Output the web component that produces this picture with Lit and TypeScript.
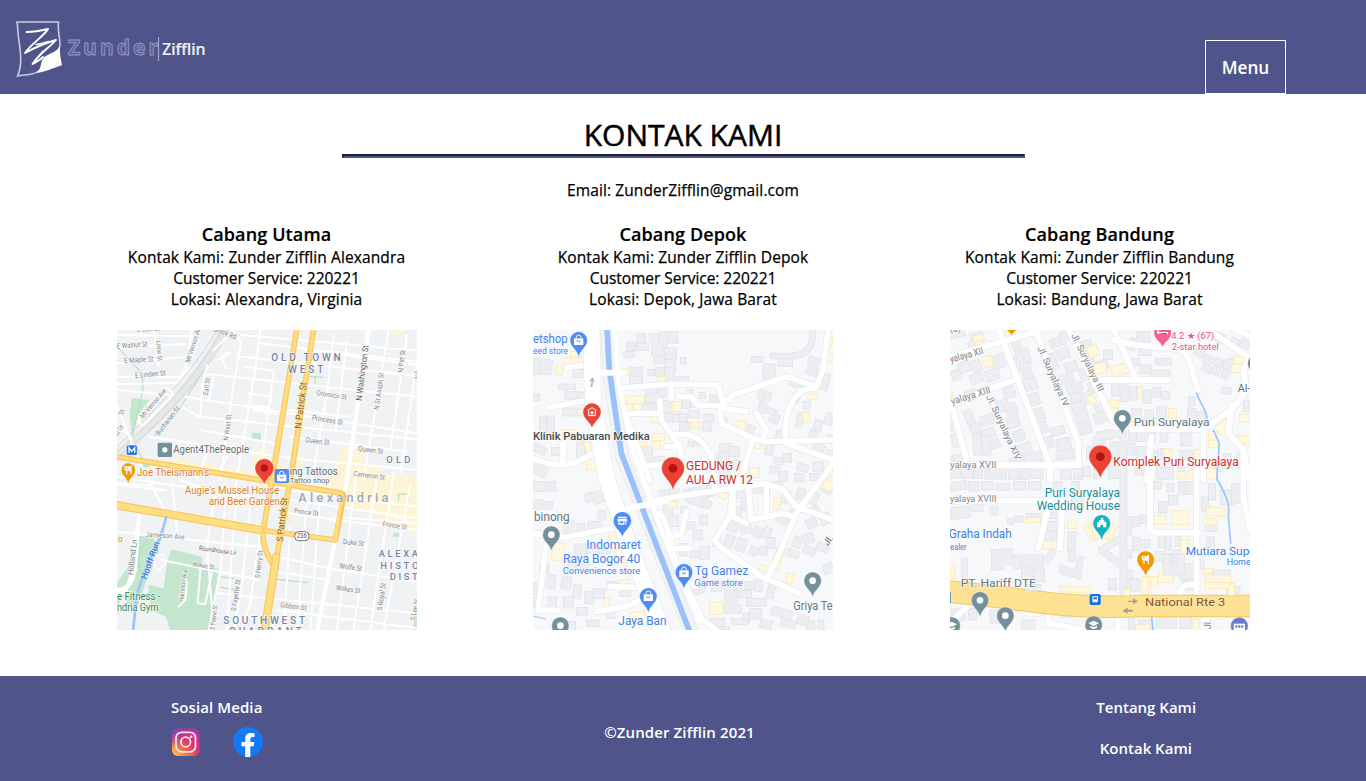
import { LitElement, html, svg, css } from "lit";
import { customElement } from "lit/decorators.js";

type Label = [text: string, x: number, y: number, width: number, size: number, kind: string, angle?: number];

// Map drawings share a 900 x 900 coordinate space.
const roads = (cls: string, width: number, d: string) =>
  svg`<path class="road ${cls}" stroke-width=${width} d=${d}></path>`;

const blocks = (cls: string, data: string) =>
  data.trim().split(/\s*;\s*/).filter(Boolean).map((row) => {
    const [x, y, w, h, a = 0] = row.split(/\s+/).map(Number);
    return svg`<rect class=${cls} x=${x} y=${y} width=${w} height=${h} transform="rotate(${a} ${x + w / 2} ${y + h / 2})"></rect>`;
  });

const spaced = new Set(["area", "city"]);
const labels = (list: Label[]) =>
  list.map(([text, x, y, width, size, kind, angle = 0]) =>
    svg`<text class="label ${kind}" x=${x} y=${y} textLength=${width} lengthAdjust=${spaced.has(kind) ? "spacing" : "spacingAndGlyphs"}
      font-size=${spaced.has(kind) ? size : size * 1.12} transform="rotate(${angle} ${x} ${y})">${text}</text>`);

const pin = (x: number, y: number, r: number, tip: number, fill: string, inner: unknown) => svg`
  <path fill=${fill} stroke="#fff" stroke-width="1.5" stroke-opacity=".6"
    d="M${x - r} ${y}A${r} ${r} 0 1 1 ${x + r} ${y}C${x + r} ${y + r * 0.75} ${x + r * 0.25} ${y + r} ${x} ${tip}C${x - r * 0.25} ${y + r} ${x - r} ${y + r * 0.75} ${x - r} ${y}Z"></path>
  <g transform="translate(${x} ${y})">${inner}</g>`;

const dot = (r: number, fill = "#fff") => svg`<circle r=${r} fill=${fill}></circle>`;
const bag = svg`<path fill="#fff" d="M-14 -6H14V14H-14Z"></path><path d="M-7 -6V-9A7 7 0 0 1 7 -9V-6" fill="none" stroke="#fff" stroke-width="3"></path><path d="M-6 1Q0 8 6 1" fill="none" stroke="#4f8df5" stroke-width="3"></path>`;
const shop = svg`<path fill="#fff" d="M-13 -12H13V-8H-13ZM-14 -6H14L15 2H12V12H-12V2H-15Z"></path><path fill="#4f8df5" d="M-8 2H3V8H-8ZM6 2H9V12H6Z"></path>`;
const fork = svg`<path d="M-10 -12V-3Q-10 1 -5 1Q0 1 0 -3V-12M-5 -12V13M8 13V-12Q3 -10 3 2H8" fill="none" stroke="#fff" stroke-width="3.6"></path>`;
const clinic = svg`<path d="M-13 -5L0 -13L13 -5M-10 -5V11H10V-5" fill="none" stroke="#fff" stroke-width="3"></path><path d="M0 -4V8M-6 2H6" stroke="#fff" stroke-width="3.5"></path>`;
const venue = svg`<path fill="#fff" d="M-14 12V-4H-8V-10H-2V-17L8 -14L0 -10H8V-4H14V12H4V4H-4V12Z"></path>`;
const cap = svg`<path fill="#fff" d="M-16 -4L0 -12L16 -4L0 4ZM-10 3L0 8L10 3V9L0 14L-10 9Z"></path>`;

const alexandria = svg`
  <rect width="900" height="900" fill="#f0f2f4"></rect>
  <g fill="#fdf3d5">
    <path d="M820 0H862V10H820ZM665 385L672 350H718V372H742V400L788 410V432L900 440V612L800 590L775 555L700 540L686 500L600 480L590 450L640 445ZM160 382L410 425V360H455V400L520 415V360L555 370V440L500 445L170 405Z"></path>
    <path d="M215 470L400 495L395 530L210 500ZM510 530L545 532L535 580L500 575Z" opacity=".45"></path>
  </g>
  <g fill="#c4e6cf">
    <path d="M44 204L96 210L62 258L46 322L38 260ZM405 308H432V331H405ZM70 402H105L95 412H80ZM63 615L112 628L126 665L85 760L55 850L30 820V780L0 830V900H0V760L40 700L62 680Z"></path>
    <path d="M163 658L256 681V705L306 716L290 830L276 900H158L148 862L102 840L94 764L140 775L150 698ZM828 608H846V620H828ZM892 860L900 850V900H890Z"></path>
  </g>
  ${roads("green", 3, "M0 50L75 130L78 180L45 320M318 28L262 120L178 250L110 320M262 120L272 132M580 140L618 142M594 142V160M84 402L48 330M312 740L350 746M310 772L350 778M480 748L572 758M845 510V492H873V512M148 565L120 635M90 630Q50 680 70 730")}
  ${roads("rail", 26, "M325 -5C270 105 165 240 0 378")}
  ${roads("railLine", 3, "M318 -5C260 105 155 235 0 365M300 0C250 90 150 210 0 350M336 0C285 105 180 240 0 385")}
  ${roads("white", 6, "M0 15L225 18M0 55L205 42M0 100L215 80M0 140L190 142L245 30M0 163L180 158L215 115M110 0L125 105M0 180L170 195M65 260L145 175Q175 180 160 205L80 285Q60 285 68 260M0 285L45 325M0 225L45 340L75 410M215 60L225 0M360 15L372 40L350 160L310 450M360 78L900 138M270 132L900 200M205 200L250 208L900 310M195 230L245 260L900 328M100 320L520 385L900 420M290 60L350 0M375 15L900 62M425 40L900 95M430 0L410 145L350 500M270 105L255 180L250 260M290 140L275 210M380 110L470 122M395 190L465 200L455 232L385 225M470 125L430 430M650 15L630 190L585 450M690 35L655 300M815 0L740 450M870 15L820 360M900 95L850 430M520 240L700 260M560 60L900 105M410 240L480 252M250 300L470 340M520 320L870 365M270 370L240 450M0 440L400 500M0 465L145 480")}
  ${roads("white", 6, "M95 450L150 555L0 530M0 460L100 465M165 460L180 600M190 450L270 480M0 605L270 635L430 650M130 690L145 692L280 720L430 750M480 680L660 720L900 755M480 725L640 750M430 650L340 640M295 480L270 650L290 900M325 510L310 720L275 900M360 510L345 650L330 900M400 530L375 760L350 900M430 600L400 820L370 900M520 590L500 900M570 500L540 900M610 480L580 900M480 840L900 895M300 790L900 850M520 510L900 565M520 550L655 570L900 600M720 420L660 900M780 440L710 900M830 430L760 900M880 460L800 900M510 480L900 530M190 800Q218 690 205 810L185 830M250 720L242 820L265 822L285 725")}
  ${roads("white", 13, "M68 548L60 620L55 700Q50 780 0 780M755 -5L690 450L600 905M0 795Q40 790 50 690")}
  ${roads("white", 5, "M130 675C100 670 110 740 130 715C160 700 145 675 130 675M340 70C300 60 320 120 335 115M300 90L335 72M760 540L870 570M650 560L900 580M350 340L310 420")}
  ${roads("orangeEdge", 17, "M540 -5L465 450L437 610Q440 665 472 710M590 -5L525 420L500 560L442 905M-5 380L400 445L675 490Q683 495 678 510L655 630L430 600L-5 525")}
  ${roads("orange", 10, "M540 -5L465 450L437 610Q440 665 472 710M590 -5L525 420L500 560L442 905M-5 380L400 445L675 490L655 630L430 600L-5 525")}
  ${roads("orangeEdge", 25, "M-5 525L430 600M478 680L442 905")}
  ${roads("orange", 18, "M-5 525L430 600M478 680L442 905")}
  ${roads("water", 8, "M148 560L130 625C110 660 65 760 58 805L48 905")}
  ${labels([
    ["E Oak St", 60, 6, 68, 17, "street", -3], ["E Walnut St", 0, 56, 92, 20, "street", -4], ["E Maple St", 22, 100, 88, 20, "street", -4],
    ["E Linden St", 55, 144, 92, 20, "street", -5], ["Little St", 117, 32, 62, 17, "street", 85], ["Mt Vernon Ave", 218, 100, 118, 19, "street", -72],
    ["Mt Vernon Ave", 78, 266, 110, 19, "street", -49], ["Block Rd", 288, 2, 72, 20, "street", 22], ["Buchanan St", 125, 318, 105, 19, "street", -52],
    ["Earl St", 272, 196, 52, 19, "street", -82], ["N West St", 334, 332, 78, 19, "street", -83], ["St", 18, 256, 16, 18, "street", -75], ["St Dr", 2, 320, 36, 18, "street", -60],
    ["OLD TOWN", 463, 94, 208, 30, "area"], ["WEST", 513, 128, 106, 30, "area"], ["N Patrick St", 552, 297, 140, 25, "highway", -83],
    ["N Washington St", 734, 213, 168, 23, "dark", -83], ["N Pitt St", 858, 128, 68, 19, "street", -84], ["N St Asaph St", 785, 240, 112, 19, "street", -82],
    ["N R", 905, 148, 25, 17, "street", -84], ["Oronoco St", 598, 195, 91, 19, "street", 9], ["Princess St", 584, 270, 94, 20, "street", 9],
    ["Queen St", 564, 336, 73, 20, "street", 8], ["Queen St", 722, 362, 76, 20, "street", 8], ["Cameron St", 709, 437, 94, 19, "street", 8],
    ["OLD", 808, 398, 72, 28, "area"], ["Agent4ThePeople", 169, 368, 227, 29, "place"], ["Joe Theismann's", 60, 438, 217, 28, "food"],
    ["ing Tattoos", 518, 434, 144, 28, "place"], ["Tattoo shop", 519, 459, 118, 20, "place"], ["Augie's Mussel House", 204, 492, 283, 28, "food"],
    ["and Beer Garden", 276, 525, 212, 28, "food"], ["Alexandria", 544, 516, 270, 38, "city"], ["S Patrick St", 497, 636, 133, 24, "highway", -84],
    ["Prince St", 530, 549, 74, 19, "street", 7], ["Prince St", 796, 589, 74, 19, "street", 8], ["Duke St", 677, 642, 64, 20, "street", 6],
    ["Wolfe St", 667, 715, 68, 20, "street", 7], ["Wilkes St", 656, 781, 74, 20, "street", 7], ["Gibbon St", 489, 832, 79, 20, "street", 7],
    ["Jamieson Ave", 85, 620, 117, 19, "street", 4], ["Roundhouse Ln", 245, 660, 113, 17, "darkStreet", 8], ["Wilkes St", 225, 709, 66, 18, "street", 8],
    ["Holland Ln", 48, 736, 107, 22, "street", -83], ["Hooff Run", 88, 749, 118, 23, "river", -70], ["Hamilton Ave", 198, 816, 98, 17, "street", -82],
    ["S Henry St", 428, 745, 83, 19, "street", -83], ["S Fayette St", 356, 844, 97, 19, "street", -81], ["S Payne St", 292, 900, 75, 18, "street", -83],
    ["S Royal St", 795, 842, 83, 20, "street", -82], ["S Lee St", 893, 872, 64, 19, "street", -77], ["ALEXA", 785, 681, 118, 28, "area"],
    ["HISTO", 790, 716, 114, 28, "area"], ["DIST", 818, 751, 84, 28, "area"], ["SOUTHWEST", 319, 882, 245, 30, "area"], ["QUADRANT", 336, 915, 218, 30, "area"],
    ["e Fitness -", 0, 809, 130, 27, "park"], ["ndria Gym", 0, 842, 124, 27, "park"], ["o", 3, 635, 14, 26, "food"],
  ])}
  <rect x="533" y="605" width="43" height="27" rx="12" fill="#fff" stroke="#555" stroke-width="2.5"></rect>
  ${labels([["236", 539, 625, 31, 17, "dark"]])}
  <rect x="28" y="345" width="33" height="31" rx="5" fill="#1a73e8" stroke="#fff" stroke-width="2"></rect>
  <path d="M36 369V353L44.500 364L53 353V369" fill="none" stroke="#fff" stroke-width="4"></path>
  <rect x="122" y="338" width="43" height="43" rx="4" fill="#75909b"></rect><circle cx="143.500" cy="359.500" r="8" fill="#fff"></circle>
  ${pin(34, 420, 21, 460, "#f29900", fork)}
  <rect x="473" y="417" width="43" height="42" rx="5" fill="#4f8df5"></rect><g transform="translate(494 440)">${bag}</g>
  ${pin(442, 414, 28, 462, "#ea4335", dot(11, "#b31412"))}
`;

const depokRoads =
  "M50 232L180 208M100 114L180 100M0 385C100 425 130 400 200 360M90 340V400M0 610L100 622L260 590M230 770L315 772M190 845L280 830L340 800M40 640L15 840L75 840M270 174L420 162L555 165L572 225M380 210L385 270L440 350L445 390M415 160V205M440 200L475 200L492 225L570 228M570 225L600 195L760 140L850 170L870 120L885 0M570 235L640 245M560 230L565 280L660 325L700 335L900 330M660 325L630 430L600 480L590 560L545 630L560 650L700 750L730 690L790 550L900 400M425 315C520 300 520 380 535 370L545 470M300 525L430 500L700 460L750 480L790 530L900 570M645 460L655 570L750 550L780 560M700 475V550M410 620L445 615L460 545M420 655L470 655M380 550C420 600 400 650 450 750L510 870L550 900M270 250H380M280 260L350 450M600 450V560L640 580M670 250L700 300L690 330M700 745L800 790M845 175C760 170 750 300 760 340M760 340L900 390M320 410L430 400M400 350L430 350";
const depok = svg`
  <rect width="900" height="900" fill="#f7f8fa"></rect>
  ${blocks("building", `
    130 5 48 45 0; 0 85 20 48 0; 22 88 35 45 10; 118 118 40 24 0; 76 162 52 17 0; 96 184 50 24 0; 135 188 32 18 0; 0 192 20 20 0; 88 234 60 24 0; 20 258 22 60 0; 42 258 22 60 0; 0 345 40 25 25;
    55 352 28 24 0; 130 330 25 60 0; 0 405 42 32 25; 280 36 28 26 0; 272 64 32 18 0; 312 10 26 26 0; 350 10 26 26 0; 380 5 22 50 0; 405 5 30 36 0; 310 40 36 22 0; 355 42 36 34 0; 362 76 28 26 0; 394 54 36 34 0; 394 88 34 32 0;
    442 82 16 20 0; 290 112 38 26 0; 345 118 20 18 0; 368 112 26 26 0; 396 112 28 38 0; 290 140 38 22 0; 430 140 38 24 0; 338 170 36 22 0; 376 166 24 38 0; 336 195 30 22 0; 656 79 34 18 0; 690 102 38 46 4; 736 84 42 26 0;
    825 80 34 26 20; 820 112 34 24 20; 768 148 30 22 15; 802 152 35 22 12; 860 130 28 50 15; 676 180 20 30 15; 695 186 18 24 15; 676 215 22 34 15; 498 188 20 18 0; 530 195 26 20 0; 464 180 18 24 0; 447 208 24 28 0; 472 215 22 18 0;
    386 212 28 35 0; 330 220 22 28 0; 352 220 20 26 0; 388 250 30 26 0; 418 250 20 26 0; 440 250 24 26 0; 465 242 34 22 0; 512 252 30 22 -5; 440 276 28 28 0; 508 276 28 28 5; 640 285 24 28 20; 566 264 16 14 0;
    467 320 20 30 15; 492 325 20 24 0; 560 340 35 28 0; 590 350 30 30 0; 550 368 38 38 0; 590 390 30 28 0; 325 350 34 28 0; 318 384 46 22 0; 365 380 30 24 0; 560 410 30 30 0; 695 345 26 30 10; 728 300 24 34 10;
    710 250 28 30 25; 700 235 30 18 20; 842 270 24 34 15; 875 250 24 34 20; 826 300 22 34 20; 840 340 34 28 25; 880 315 20 24 20; 750 370 26 26 0; 722 382 28 22 10; 792 402 34 22 15; 840 395 32 30 0; 878 360 22 34 18;
    775 195 24 22 30; 810 215 22 22 0; 790 250 20 40 10; 738 425 26 30 0; 785 430 28 26 0; 830 430 34 22 0; 710 410 30 22 0;
    0 455 40 30 0; 45 455 24 28 0; 156 490 22 26 -20; 178 482 50 36 -15; 0 510 32 28 -8; 35 515 24 22 0; 195 542 24 28 0; 90 570 34 40 0; 130 580 26 38 0; 165 574 40 22 0; 125 642 32 34 0; 160 640 35 30 0; 198 640 35 32 0; 95 680 32 40 0; 130 686 38 30 0; 20 700 28 30 0; 42 735 26 40 8; 85 740 30 38 10; 120 765 24 40 8; 155 785 28 36 0; 180 775 35 30 0;
    222 755 30 24 0; 260 770 32 30 0; 0 760 30 36 10; 0 802 26 30 0; 45 800 26 34 0; 92 800 30 34 0; 130 832 34 24 0; 160 870 40 20 0; 100 875 28 25 0; 220 835 24 30 0; 320 765 30 20 0; 380 480 28 30 0; 410 475 28 35 0; 452 477 22 26 0; 470 470 60 38 -12;
    392 520 28 30 0; 405 555 32 35 0; 442 530 20 18 0; 462 490 60 36 18; 520 468 28 28 18; 505 510 30 22 25; 500 555 24 30 0; 460 575 26 22 0; 480 600 28 30 0; 440 640 22 38 0; 470 660 28 24 0; 500 650 30 38 0; 540 625 24 25 0;
    610 470 34 36 0; 625 510 24 30 -15; 600 530 25 28 0; 585 570 30 35 15; 620 575 34 35 -15; 660 590 28 32 25; 690 592 24 35 25; 575 615 28 35 20; 610 625 30 40 20; 650 650 24 26 20; 680 650 24 25 0; 700 622 26 34 0; 730 560 40 22 30; 765 540 30 28 25;
    660 462 26 28 0; 690 470 20 36 0; 720 455 28 22 0; 748 480 20 40 20; 790 475 24 36 20; 820 485 35 36 25; 865 465 34 25 30; 830 530 30 25 -25; 860 550 34 34 -25; 820 565 32 28 -25; 810 610 32 30 -20; 780 620 25 34 20; 760 660 38 22 20;
    810 650 38 24 25; 850 640 38 24 25; 870 700 30 30 -20; 495 745 24 28 0; 478 778 18 16 0; 500 770 14 20 0; 535 750 30 34 0; 570 752 24 22 0; 602 755 24 24 0; 635 755 28 24 0; 665 750 24 34 0; 704 755 22 50 15; 575 780 40 36 0; 615 782 40 22 0; 640 805 60 24 0;
    575 820 28 30 0; 602 825 24 24 0; 630 850 20 26 0; 650 835 36 32 0; 715 835 64 26 15; 680 870 36 26 15; 742 870 45 22 15; 792 855 36 30 20; 820 875 28 24 -20; 532 865 44 28 0; 595 865 50 18 0; 548 890 40 10 0; 855 870 18 28 0`)}
  ${blocks("shop", `112 64 34 16 0; 92 82 52 20 0; 67 110 20 24 0; 134 238 28 18 0; 90 300 40 28 0; 156 335 18 36 -15; 160 388 30 32 0; 260 117 30 16 0; 374 140 24 18 0; 278 198 56 22 0; 276 222 22 22 0; 300 222 26 24 0; 355 252 26 26 10; 357 310 38 22 0; 302 334 38 16 0; 357 336 26 22 0; 419 215 26 30 0; 472 276 28 18 0;
    614 272 22 30 10; 665 335 20 20 0; 790 338 24 30 25; 825 192 28 16 10; 880 20 20 26 0; 880 70 20 24 0; 808 246 22 30 -10; 650 412 30 30 0; 876 408 24 34 -20; 215 500 26 15 10; 402 514 30 20 0; 558 480 28 26 30; 722 504 20 32 10; 870 450 30 30 25; 440 592 20 15 0; 12 598 14 14 0; 58 638 34 54 10; 230 605 25 50 0; 250 655 28 45 -10; 255 750 35 14 -10; 212 804 18 32 0; 292 845 46 40 -10; 350 880 24 20 0; 530 818 42 36 0; 680 705 18 18 20; 730 652 24 25 20; 718 672 25 45 20; 760 730 22 30 15; 455 700 20 50 0; 78 548 15 30 20`)}
  ${roads("roadEdge", 20, "M720 77C770 80 850 90 838 -5")}
  ${roads("lane", 15, "M720 77C770 80 850 90 838 -5")}
  ${roads("roadEdge", 20, depokRoads)}
  ${roads("white", 17, depokRoads)}
  ${roads("roadEdge", 52, "M175 -5L180 220L220 440L285 640L390 905")}
  ${roads("white", 49, "M175 -5L180 220L220 440L285 640L390 905")}
  ${roads("roadEdge", 42, "M222 -5L232 150L268 380L310 490L475 905")}
  ${roads("bank", 39, "M222 -5L232 150L268 380L310 490L475 905")}
  ${roads("white", 12, "M244 -5L255 150L290 330L350 500L400 640L500 875")}
  ${roads("canal", 17, "M222 -5L229 120L265 370L305 475L470 905")}
  ${roads("white", 18, "M170 128H270M285 535L400 512")}
  ${roads("water", 3, "M0 858L38 867")}
  <path d="M173 171L176 153L168 156L178 142L187 156L180 153L178 171Z" fill="#a9b2c2"></path>
  ${labels([
    ["etshop", 0, 39, 104, 33, "store"], ["eed store", 0, 71, 105, 26, "store"], ["Klinik Pabuaran Medika", 0, 329, 350, 30, "darkPlace"],
    ["GEDUNG /", 459, 420, 165, 33, "red"], ["AULA RW 12", 459, 462, 201, 33, "red"], ["binong", 3, 574, 107, 33, "greyPlace"],
    ["Indomaret", 160, 656, 164, 33, "store"], ["Raya Bogor 40", 90, 698, 232, 33, "store"], ["Convenience store", 89, 731, 233, 26, "store"],
    ["Tg Gamez", 485, 735, 161, 33, "store"], ["Game store", 484, 767, 145, 26, "store"], ["Jaya Ban", 256, 884, 145, 33, "store"],
    ["Griya Te", 781, 840, 118, 32, "greyPlace"], ["Jl.", 884, 649, 30, 24, "dark", -55],
  ])}
  ${pin(137, 31, 26, 80, "#4f8df5", bag)}
  ${pin(177, 246, 27, 294, "#ea4335", clinic)}
  ${pin(420, 415, 34, 479, "#ea4335", dot(13, "#b31412"))}
  ${pin(268, 572, 27, 621, "#4f8df5", shop)}
  ${pin(55, 614, 26, 662, "#75909b", dot(10))}
  ${pin(453, 727, 26, 776, "#4f8df5", bag)}
  ${pin(346, 799, 26, 848, "#4f8df5", bag)}
  ${pin(839, 752, 26, 800, "#75909b", dot(10))}
  ${pin(82, 887, 26, 935, "#75909b", dot(10))}
`;

const bandungRoads =
  "M145 -5L300 405V450M255 -5L370 300L385 340V405H0M0 80L260 5M0 220L205 145M5 225L50 390M355 -5L490 275M490 -5L560 150M455 150H655M490 30L540 42L700 60C730 100 730 150 745 180M680 50H690M770 -5L900 85M545 298H760L850 235L890 180L880 120L900 80M760 298V450M600 450L610 400H750M0 512H300L265 655M340 480L330 655M600 450V600L615 608H745M740 420V800M690 820Q680 755 740 765M845 225L835 310L880 360L900 450M880 365L880 500L900 600M590 450L605 320M850 -5L900 20M190 810C210 860 280 860 290 830M295 830V880L400 900M505 800V900M0 880L60 820M760 870L870 840M780 860V900";
const bandung = svg`
  <rect width="900" height="900" fill="#f7f8fa"></rect>
  ${blocks("building", `
    0 0 45 22 -12; 60 8 40 30 -15; 25 95 35 32 -20; 64 90 30 35 -20; 5 120 28 30 -20; 125 75 40 40 -20; 60 130 38 30 -20; 105 118 42 34 -20; 55 30 42 28 -20; 190 30 24 45 -20; 215 55 25 48 -20; 188 82 25 42 -20; 215 98 30 50 -20; 222 145 38 35 -18; 234 190 35 36 -18; 248 235 35 35 -18; 262 275 30 35 -18; 275 320 36 35 -15; 290 70 30 50 -20; 320 55 38 32 -20; 345 95 38 32 -20; 330 130 40 30 -20; 350 160 48 28 -18;
    360 190 38 25 -15; 364 216 42 28 -15; 376 248 38 30 -15; 386 280 38 32 -15; 302 290 42 25 -15; 320 325 42 35 -12; 318 360 54 28 -5; 300 22 45 28 -20; 330 5 22 30 -20; 390 32 38 38 -20; 410 75 24 35 -20; 390 115 22 38 -20; 415 155 30 34 -20; 398 185 32 34 -20; 435 220 38 26 -20; 432 246 40 32 -20; 440 90 34 30 -20; 460 60 28 28 0;
    160 170 35 34 -20; 140 210 36 34 -20; 166 220 35 32 -20; 170 258 38 35 -20; 190 300 34 32 -20; 205 340 40 32 -20; 178 380 45 25 -10; 90 255 42 30 -20; 95 295 40 30 -20; 105 330 45 28 -20; 70 310 26 65 -4; 95 315 26 60 -4; 45 240 25 40 -20; 60 280 32 30 -20; 0 270 25 30 -15; 5 310 30 40 -15; 225 370 50 30 -15; 5 375 35 28 -10; 45 180 35 30 -20;
    615 85 50 20 0; 485 158 22 40 0; 510 165 26 50 0; 540 170 20 40 0; 580 180 24 40 0; 608 172 24 30 0; 635 185 24 24 0; 545 235 30 40 0; 585 240 25 35 0; 620 230 30 40 0; 510 100 24 30 0; 540 85 30 22 0; 570 105 35 25 0; 600 120 25 25 0; 630 120 30 25 0; 565 55 40 22 0;
    760 75 25 24 25; 790 85 28 24 25; 820 90 22 28 25; 755 105 28 22 25; 785 110 24 26 25; 815 120 22 26 25; 815 172 30 20 10; 715 200 20 30 0; 712 235 28 28 0; 742 245 24 30 0; 535 25 24 35 20; 560 5 40 30 0; 800 10 24 28 25; 840 25 30 25 25; 870 30 30 25 25; 835 85 22 24 0; 735 50 28 30 25;
    440 305 26 35 0; 465 300 24 28 0; 435 345 25 38 0; 410 350 22 40 0; 480 335 25 50 0; 535 300 24 34 0; 560 300 26 35 0; 592 302 24 32 0; 630 308 24 28 0; 692 310 34 38 0; 530 340 25 35 0; 558 350 28 38 0; 600 360 24 30 0; 630 355 20 45 0; 690 362 38 32 0; 555 405 34 30 0; 620 412 50 36 0; 682 385 22 40 0; 730 410 28 36 0; 790 390 26 35 0; 820 370 24 45 0; 860 370 26 45 0; 880 210 20 35 0; 400 410 22 30 0; 430 410 24 35 0; 475 410 30 36 0;
    0 420 32 25 -8; 35 415 32 30 -8; 70 420 28 25 0; 105 417 35 30 0; 145 420 24 28 0; 175 420 32 28 0; 210 417 28 32 0; 245 420 34 25 0; 330 420 34 28 0; 370 415 28 34 0; 0 455 50 26 -8; 55 455 32 28 0; 95 455 35 25 0; 140 460 38 22 0; 190 455 38 25 0; 235 455 38 25 0; 0 530 60 35 -8; 65 520 34 25 0; 120 530 24 25 0; 172 565 18 18 0; 195 558 24 18 0; 228 550 45 22 0;
    285 540 35 25 0; 310 455 28 30 0; 365 455 24 34 0; 365 490 35 50 0; 274 575 45 28 0; 280 605 40 25 0; 354 605 24 28 0; 352 635 24 28 0; 355 665 20 28 0; 168 655 18 50 0; 124 658 38 62 0; 190 675 20 40 0; 214 675 66 36 0; 215 710 36 40 0; 250 715 34 40 0; 290 655 20 45 35; 35 685 18 60 0; 380 680 18 35 10; 525 720 22 55 0; 475 745 25 35 0; 520 560 24 55 0; 545 560 25 30 0; 570 555 24 25 0; 530 660 15 24 0; 548 622 22 40 0; 575 628 25 25 0; 625 615 20 38 0; 645 620 20 40 0; 675 620 20 30 0; 615 665 30 28 0; 640 670 28 34 0; 670 660 30 40 0;
    605 455 30 22 0; 650 460 22 25 0; 685 455 22 38 0; 710 455 30 38 0; 655 495 28 30 0; 625 515 26 34 0; 755 500 20 45 0; 775 460 22 50 0; 810 480 40 45 0; 845 460 22 60 0; 765 570 34 34 0; 770 620 24 30 0; 690 700 45 50 0; 740 690 22 28 0; 700 750 28 30 0; 790 720 50 20 0; 830 770 40 20 0; 540 745 28 40 0; 0 835 45 40 -8; 55 835 24 35 0; 120 840 34 40 0; 225 830 50 25 0; 330 835 38 28 0; 215 870 40 30 0; 535 865 20 35 0; 565 870 40 30 0; 620 860 60 34 0; 690 860 35 35 0`)}
  ${blocks("shop", `70 15 32 20 -10; 75 32 22 22 -15; 100 78 28 34 -15; 165 0 28 20 -15; 412 45 32 36 -20; 432 98 38 32 -15; 485 105 50 30 -15; 563 170 13 40 0; 475 210 30 24 5; 478 234 26 25 5; 655 236 24 28 0; 414 195 22 26 -25; 850 80 36 20 0; 845 102 35 26 0; 798 275 45 32 -35; 776 305 26 26 0; 776 330 26 22 0; 868 252 32 24 0; 860 318 40 24 10; 642 355 24 30 0; 732 358 22 35 0; 682 425 25 22 0; 712 420 25 26 0; 770 415 32 32 0;
    230 562 42 16 0; 352 575 28 20 0; 278 633 30 24 0; 606 556 42 28 0; 665 542 50 42 0; 768 532 60 26 5; 760 565 42 18 5; 692 630 26 40 0; 410 580 30 50 -30; 465 580 30 50 30; 428 580 50 45 0; 576 740 20 50 0; 602 740 22 28 0; 625 727 45 30 0; 762 716 26 15 0; 765 735 80 22 0; 765 757 85 18 0; 0 705 15 40 0; 835 762 18 34 0; 520 775 20 25 0; 555 885 45 15 0; 728 868 20 24 0; 0 185 8 18 0`)}
  <path class="building" d="M330 704L394 725V750L330 730ZM638 673H662V705H680V673H704V735H640Z"></path>
  ${roads("roadEdge", 23, "M440 360V330Q440 310 520 312V800M520 620L455 660L520 710")}
  ${roads("lane", 19, "M440 360V330Q440 310 520 312V800M520 620L455 660L520 710")}
  ${roads("roadEdge", 21, bandungRoads)}
  ${roads("white", 18, bandungRoads)}
  ${roads("water", 5, "M740 190C750 220 775 250 770 265M790 300L808 340L800 450M803 450C830 500 840 520 835 560L842 640M605 860L610 905")}
  ${roads("highwayEdge", 68, "M-5 785C200 800 330 840 570 828L905 828")}
  ${roads("highwayFill", 62, "M-5 785C200 800 330 840 570 828L905 828")}
  ${blocks("shop", "328 770 94 18 4; 576 740 20 52 0; 835 762 18 34 0; 520 777 20 20 0")}
  ${blocks("building", "227 763 45 18 0")}
  <path fill="#a7a08b" d="M533 812H549V805L564 814L549 823V816H533ZM548 839H533V833L517 842L533 851V845H548Z"></path>
  ${labels([
    ["yalaya XII", 2, 98, 103, 27, "street", -15], ["yalaya XIII", 6, 224, 123, 27, "street", -17], ["yalaya XVII", 0, 415, 139, 26, "street"],
    ["yalaya XVIII", 0, 516, 139, 26, "street"], ["Jl. Suryalaya IV", 262, 54, 194, 25, "street", 66], ["Jl. Suryalaya III", 363, 16, 190, 25, "street", 64],
    ["Jl. Suryalaya XIV", 108, 200, 212, 25, "street", 65], ["(a)", 0, 6, 32, 24, "street"], ["4.2 ★ (67)", 664, 26, 129, 24, "pink"], ["2-star hotel", 665, 60, 141, 25, "pink"],
    ["Al-", 863, 185, 38, 31, "greyPlace"], ["Puri Suryalaya", 551, 288, 228, 31, "greyPlace"], ["Komplek Puri Suryalaya", 490, 407, 376, 32, "red"],
    ["Puri Suryalaya", 284, 501, 226, 32, "teal"], ["Wedding House", 260, 540, 250, 32, "teal"], ["Graha Indah", -4, 625, 189, 32, "blue"], ["ealer", 0, 661, 50, 25, "blue"],
    ["PT. Hariff DTE", 32, 771, 226, 31, "greyPlace"], ["Mutiara Supe", 707, 674, 210, 31, "blue"], ["Home", 830, 704, 72, 26, "blue"],
    ["National Rte 3", 585, 829, 241, 31, "rte"], ["Jl.", 782, 898, 30, 24, "street", -90],
  ])}
  ${pin(638, 8, 26, 50, "#f06292", svg`<path d="M-14 4V-8M-14 0H14V4" stroke="#fff" stroke-width="4"></path>`)}
  ${pin(185, -20, 24, 16, "#f29900", dot(0))}
  ${pin(918, 100, 25, 145, "#75909b", dot(10))}
  ${pin(517, 265, 26, 313, "#75909b", dot(10))}
  ${pin(451, 380, 34, 444, "#ea4335", dot(13, "#b31412"))}
  ${pin(455, 580, 26, 630, "#16b1c5", venue)}
  ${pin(587, 689, 26, 738, "#f29900", fork)}
  ${pin(90, 811, 26, 860, "#75909b", dot(10))}
  ${pin(166, 857, 26, 905, "#75909b", dot(10))}
  ${pin(5, 887, 26, 935, "#75909b", cap)}
  ${pin(431, 884, 26, 932, "#75909b", cap)}
  ${pin(868, 888, 26, 936, "#6d7ac9", svg`<path fill="#fff" d="M-17 -7H17V12H-17Z"></path><path fill="#6d7ac9" d="M-12 -2H-6V5H-12ZM-3 -2H3V5H-3ZM6 -2H12V5H6Z"></path>`)}
  <rect x="419" y="792" width="33" height="33" rx="5" fill="#1a6fe0"></rect>
  <path fill="#fff" d="M427 799H444V815H440V818H437V815H433V818H430V815H427Z"></path><path fill="#1a6fe0" d="M430 802H441V808H430Z"></path>
  <rect x="-20" y="787" width="22" height="32" fill="#1a6fe0"></rect>
`;

const branches = [
  { name: "Cabang Utama", contact: "Zunder Zifflin Alexandra", place: "Alexandra, Virginia", map: alexandria },
  { name: "Cabang Depok", contact: "Zunder Zifflin Depok", place: "Depok, Jawa Barat", map: depok },
  { name: "Cabang Bandung", contact: "Zunder Zifflin Bandung", place: "Bandung, Jawa Barat", map: bandung },
];

@customElement("app-root")
export class AppRoot extends LitElement {
  static styles = css`
    :host { display: flex; flex-direction: column; height: 781px; overflow: hidden; background: #fff; color: #000; font: 15.5px/21px "Segoe UI", "Open Sans", "Noto Sans", sans-serif; }
    header { height: 94px; box-sizing: border-box; background: #4f548a; display: flex; justify-content: space-between; padding-right: 80px; align-items: flex-end; flex: none; }
    .logo { width: 230px; height: 94px; display: block; }
    .menu { box-sizing: border-box; width: 81px; height: 54px; border: 1px solid #fff; color: #fff; font-weight: 600; font-size: 17.2px; padding-top: 1px; display: flex; align-items: center; justify-content: center; }
    main { flex: 1; text-align: center; padding-top: 21px; }
    h1 { margin: 0; font-size: 30px; line-height: 40px; height: 39px; font-weight: 400; -webkit-text-stroke: .5px #000; }
    .rule { width: 683px; height: 4px; margin: 0 auto; border: 2px solid; border-color: #1c1d3b #4f548a #4f548a #1c1d3b; box-sizing: border-box; }
    p { margin: 0; letter-spacing: .11px; -webkit-text-stroke: .25px #000; }
    .service { letter-spacing: -.04px; }
    .email { margin-top: 22px; }
    .branches { display: flex; justify-content: space-evenly; margin-top: 21px; }
    .branch { width: 300px; }
    h2 { margin: 0; font-size: 18px; line-height: 24px; height: 25px; font-weight: 600; letter-spacing: .12px; -webkit-text-stroke: .2px #000; }
    .map { display: block; width: 300px; height: 300px; margin-top: 20px; overflow: hidden; }
    footer { height: 105px; box-sizing: border-box; flex: none; background: #4f548a; color: #fff; font-weight: 600; font-size: 15px; display: flex; justify-content: space-around; text-align: center; white-space: nowrap; }
    .social { width: 92px; padding-top: 21px; letter-spacing: .1px; }
    .icons { display: flex; justify-content: space-between; align-items: center; margin-top: 9px; }
    .copy { width: 151px; padding-top: 46px; letter-spacing: .12px; }
    .links { width: 99px; padding-top: 21px; display: flex; flex-direction: column; gap: 20px; }
    .icons svg { display: block; }

    .road { fill: none; stroke-linejoin: round; stroke-linecap: round; }
    .white { stroke: #fff; } .roadEdge { stroke: #e1e3e8; } .lane { stroke: #eceef1; } .bank { stroke: #f1f3f6; }
    .green { stroke: #a9dab9; } .rail { stroke: #e5e7e9; } .railLine { stroke: #d3d6d9; }
    .orangeEdge { stroke: #f9c75a; } .orange { stroke: #ffdd82; } .water { stroke: #9cc4ff; } .canal { stroke: #9bc1fb; }
    .highwayEdge { stroke: #f6c75f; } .highwayFill { stroke: #fde294; }
    .building { fill: #eceef1; stroke: #dee1e6; stroke-width: 2; }
    .shop { fill: #fff8e1; stroke: #fbe4a9; stroke-width: 2; }
    .label { font-family: Roboto, sans-serif; paint-order: stroke; stroke: #fff; stroke-width: 4px; stroke-linejoin: round; stroke-opacity: .85; }
    .street { fill: #7f8488; } .dark { fill: #55595d; } .darkStreet { fill: #665c4c; } .place { fill: #666b70; } .darkPlace { fill: #4a4a4a; font-weight: 500; }
    .area { fill: #7485a3; font-weight: 500; } .city { fill: #a0a7b4; font-weight: 500; stroke-opacity: .4; }
    .food { fill: #e37b20; } .highway { fill: #865d2a; stroke: #ffe6a4; } .rte { fill: #83552b; stroke: #fde9b4; } .river { fill: #3d78d8; font-weight: 500; stroke-opacity: .3; }
    .park { fill: #2c8654; } .store { fill: #3f80ed; } .blue { fill: #367de8; } .red { fill: #c5302f; } .pink { fill: #ec4c8c; } .teal { fill: #168f98; } .greyPlace { fill: #607681; }
    .outlined { font: 700 21px "Noto Sans", sans-serif; fill: #5c6196; stroke: #9599c3; stroke-width: .9px; }
    .brand { font: 500 16px "Noto Sans", sans-serif; fill: #f1f1f8; stroke: #f1f1f8; stroke-width: .2px; }
  `;

  render() {
    return html`
      <header>
        <svg class="logo" viewBox="0 0 230 94">
          <path d="M17 22H58.500C57.500 31 60 38 60 45C60 50 56 52 51 54C44 57 42 60 41.500 65C41 71 37 73 32 74C27 75 22 75 17.500 76C23 64 20 50 19 41C17.500 33 18 27 17 22Z" fill="none" stroke="#c9cbe1" stroke-width="1.6"></path>
          <path d="M60 46C59.500 54 61 60 62 65C53 68 46 72 36 73C43 69 40 62 44 58C48 54 57 53 60 46Z" fill="#fff"></path>
          <path d="M26.500 32C34 32 40 31 48 29C44 36 32 43 25 53C34 48 46 43 56 40C50 47 39 54 32.500 64C36 62 40 60 43 57" fill="none" stroke="#fff" stroke-width="1.9" stroke-linejoin="round" stroke-linecap="round"></path>
          <path d="M36 44.500C41 44 45 42 49 41.500M43 51L35 61" fill="none" stroke="#fff" stroke-width="1.3" stroke-linecap="round"></path>
          <text class="outlined" x="68" y="55.200" textLength="90">Zunder</text>
          <path d="M158.500 37V61" stroke="#a4a7cb" stroke-width="1.2"></path>
          <text class="brand" x="162" y="55" textLength="43.500">Zifflin</text>
        </svg>
        <div class="menu">Menu</div>
      </header>
      <main>
        <h1>KONTAK KAMI</h1>
        <div class="rule"></div>
        <p class="email">Email: ZunderZifflin@gmail.com</p>
        <div class="branches">
          ${branches.map((b) => html`
            <section class="branch">
              <h2>${b.name}</h2>
              <p>Kontak Kami: ${b.contact}</p>
              <p class="service">Customer Service: 220221</p>
              <p>Lokasi: ${b.place}</p>
              <svg class="map" viewBox="0 0 900 900">${b.map}</svg>
            </section>`)}
        </div>
      </main>
      <footer>
        <div class="social">
          <div>Sosial Media</div>
          <div class="icons">
            <svg width="30" height="30" viewBox="0 0 30 30">
              <defs>
                <linearGradient id="ig" x1="1" y1="0" x2="0" y2="1"><stop offset="0" stop-color="#a735b0"></stop><stop offset=".45" stop-color="#e0316e"></stop><stop offset=".75" stop-color="#f58340"></stop><stop offset="1" stop-color="#ffd476"></stop></linearGradient>
                <radialGradient id="violet" cx="0" cy="0" r=".7"><stop offset="0" stop-color="#4c50d8"></stop><stop offset="1" stop-color="#8a3ac8" stop-opacity="0"></stop></radialGradient>
              </defs>
              <rect x="1" y="1.500" width="27.500" height="27.500" rx="6" fill="url(#ig)"></rect>
              <rect x="1" y="1.500" width="27.500" height="27.500" rx="6" fill="url(#violet)"></rect>
              <g fill="none" stroke="#fbe4ee" stroke-width="1.800"><rect x="5" y="5.300" width="19.500" height="19.500" rx="5.500"></rect><circle cx="14.700" cy="15" r="4.800"></circle></g>
              <circle cx="20.200" cy="9.800" r="1.300" fill="#fbe4ee"></circle>
            </svg>
            <svg width="30" height="30" viewBox="0 0 30 30">
              <circle cx="15" cy="15" r="15" fill="#1479f5"></circle>
              <path fill="#fff" d="M12.200 30V19.300H8.500V15H12.200V11.700C12.200 8 14.400 6 17.700 6C19.300 6 21.500 6.300 21.500 6.300V10H19.500C17.600 10 17.300 11.100 17.300 12.300V15H21.300L20.600 19.300H17.300V30Z"></path>
            </svg>
          </div>
        </div>
        <div class="copy">©Zunder Zifflin 2021</div>
        <div class="links"><span>Tentang Kami</span><span>Kontak Kami</span></div>
      </footer>
    `;
  }
}
